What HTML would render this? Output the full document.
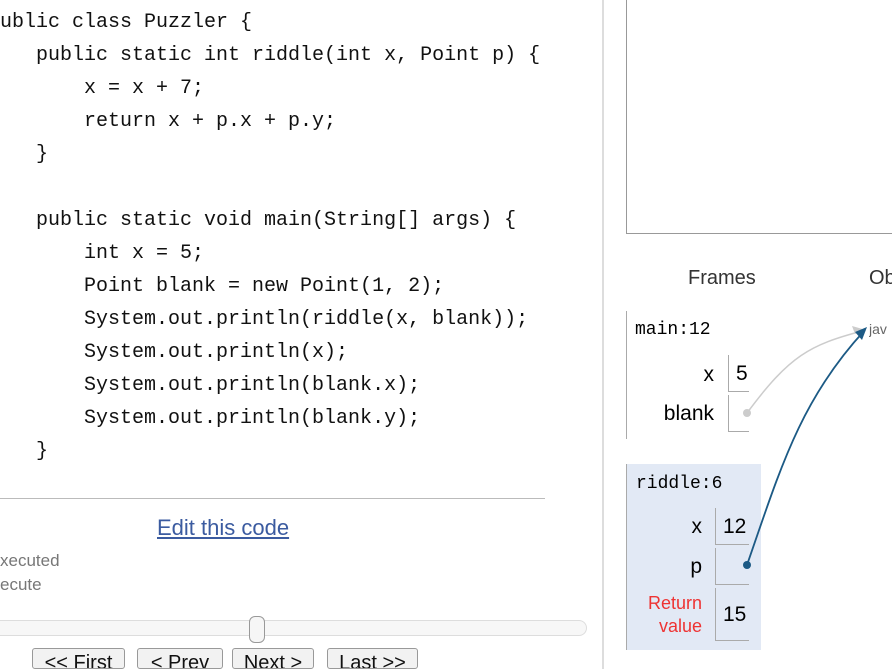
<!DOCTYPE html>
<html><head><meta charset="utf-8"><style>
*{margin:0;padding:0;box-sizing:border-box}
html,body{width:892px;height:669px;overflow:hidden}
body{background:#fff;position:relative;font-family:"Liberation Sans",sans-serif;color:#000}
.a{position:absolute;white-space:pre}
.code{font-family:"Liberation Mono",monospace;font-size:20px;line-height:33px;left:-12px;top:6px;color:#111}
.btn{position:absolute;top:648px;height:30px;border:1px solid #999;border-radius:3px;background:#f2f2f2;font-size:20px;text-align:center;line-height:28px;color:#111;overflow:hidden}
.lab{position:absolute;font-size:21px;text-align:right;color:#000}
.val{position:absolute;border-left:1px solid #aaa;border-bottom:1px solid #aaa;font-size:21px;padding-left:7px;line-height:38px}
.mono{font-family:"Liberation Mono",monospace;font-size:18px}
</style></head><body>
<div class="a code">public class Puzzler {
    public static int riddle(int x, Point p) {
        x = x + 7;
        return x + p.x + p.y;
    }

    public static void main(String[] args) {
        int x = 5;
        Point blank = new Point(1, 2);
        System.out.println(riddle(x, blank));
        System.out.println(x);
        System.out.println(blank.x);
        System.out.println(blank.y);
    }</div>
<div class="a" style="left:0;top:498px;width:545px;height:1px;background:#bbb"></div>
<div class="a" style="left:157px;top:515px;font-size:22px;color:#3b5ba0;text-decoration:underline">Edit this code</div>
<div class="a" style="left:0;top:551px;font-size:17px;color:#777">xecuted</div>
<div class="a" style="left:0;top:575px;font-size:17px;color:#777">ecute</div>
<div class="a" style="left:-20px;top:620px;width:607px;height:16px;border:1px solid #ddd;border-radius:8px;background:#f7f7f7"></div>
<div class="a" style="left:249px;top:616px;width:16px;height:27px;border:1px solid #999;border-radius:6px;background:#f6f6f6"></div>
<div class="btn" style="left:32px;width:93px;height:21px">&lt;&lt; First</div>
<div class="btn" style="left:137px;width:86px;height:21px">&lt; Prev</div>
<div class="btn" style="left:232px;width:82px;height:21px">Next &gt;</div>
<div class="btn" style="left:327px;width:91px;height:21px">Last &gt;&gt;</div>

<div class="a" style="left:602px;top:0;width:2px;height:669px;background:#ddd"></div>
<div class="a" style="left:626px;top:-2px;width:266px;height:236px;border:1px solid #999;border-right:none"></div>
<div class="a" style="left:688px;top:267px;font-size:20px;color:#333">Frames</div>
<div class="a" style="left:869px;top:267px;font-size:20px;color:#333;width:23px;overflow:hidden">Ob</div>
<div class="a" style="left:869px;top:321px;font-size:14px;color:#666;width:23px;overflow:hidden">jav</div>

<div class="a" style="left:626px;top:311px;width:1px;height:128px;background:#aaa"></div>
<div class="a mono" style="left:635px;top:320px">main:12</div>
<div class="lab" style="left:640px;top:363px;width:74px">x</div>
<div class="val" style="left:728px;top:355px;width:21px;height:37px">5</div>
<div class="lab" style="left:640px;top:402px;width:74px">blank</div>
<div class="val" style="left:728px;top:395px;width:21px;height:37px"></div>

<div class="a" style="left:626px;top:464px;width:135px;height:186px;background:#e2e9f5;border-left:1px solid #aaa"></div>
<div class="a mono" style="left:636px;top:474px">riddle:6</div>
<div class="lab" style="left:630px;top:515px;width:72px">x</div>
<div class="val" style="left:715px;top:508px;width:34px;height:37px">12</div>
<div class="lab" style="left:630px;top:555px;width:72px">p</div>
<div class="val" style="left:715px;top:548px;width:34px;height:37px"></div>
<div class="lab" style="left:630px;top:592px;width:72px;font-size:18px;line-height:23px;color:#e33;text-align:right">Return<br>value </div>
<div class="val" style="left:715px;top:588px;width:34px;height:53px;line-height:54px">15</div>

<svg class="a" style="left:0;top:0" width="892" height="669">
<path d="M747 413 C790 355 810 345 862 331" stroke="#ccc" stroke-width="1.5" fill="none"/>
<circle cx="747" cy="413" r="4" fill="#ccc"/>
<path d="M866 330 L852 326 L855 334 Z" fill="#ccc"/>
<path d="M747 565 C780 470 800 400 865 330" stroke="#1c5a85" stroke-width="1.8" fill="none"/>
<circle cx="747" cy="565" r="4" fill="#1c5a85"/>
<path d="M867 327 L855 332 L862 340 Z" fill="#1c5a85"/>
</svg>
</body></html>
